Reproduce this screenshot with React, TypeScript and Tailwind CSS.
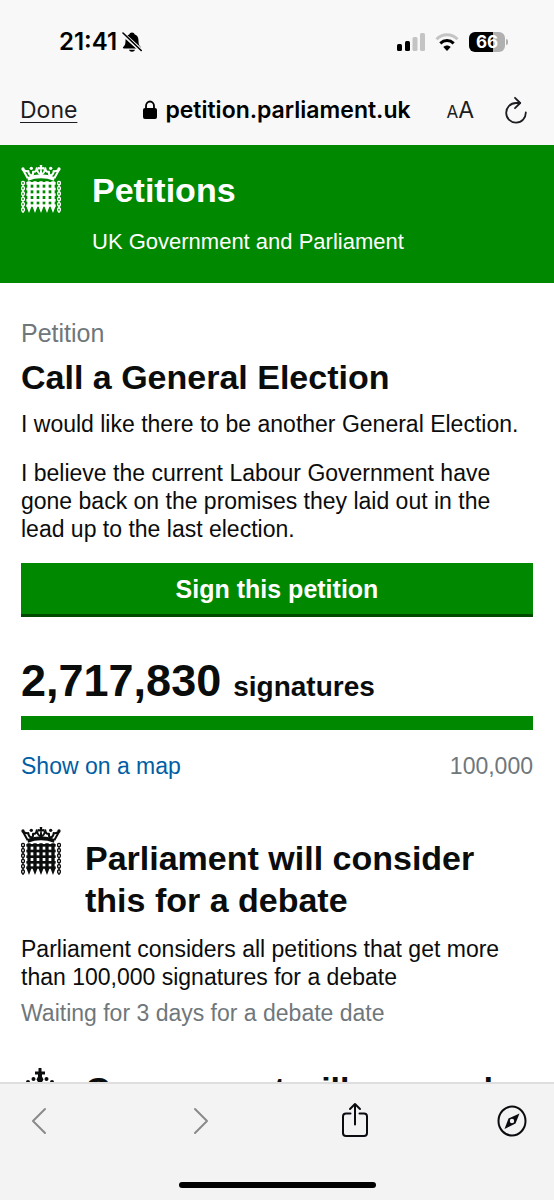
import type { ReactNode } from 'react';

const GOAL = 100000;
const SIGNATURES = 2717830;

const chainLinks = [49, 65, 81, 97, 113, 129];
const barColumns = [19, 37, 55, 73, 91];
const barRows = [51, 68, 85, 102];

function Portcullis({ className }: { className?: string }) {
  return (
    <svg viewBox="0 0 120 144" className={className} fill="currentColor" aria-hidden>
      {/* crown */}
      <path d="M21 47 L19 36 Q60 19 101 36 L99 47 Q60 33 21 47 Z" />
      <path
        d="M20 40 L6 14 Q14 20 22 18 Q22 28 30 32 Q38 30 36 20 Q46 22 47 10 Q50 26 60 28 Q70 26 73 10 Q74 22 84 20 Q82 30 90 32 Q98 28 98 18 Q106 20 114 14 L100 40"
        fill="none"
        stroke="currentColor"
        strokeWidth="6"
        strokeLinejoin="round"
      />
      <path d="M56 28 L58 13 L50 14 L50 6 L57 7 L56 0 L64 0 L63 7 L70 6 L70 14 L62 13 L64 28 Z" />
      <circle cx="6" cy="12" r="5" />
      <circle cx="31" cy="10" r="5" />
      <circle cx="89" cy="10" r="5" />
      <circle cx="114" cy="12" r="5" />
      {/* gate */}
      {barColumns.map((x) => (
        <path key={x} d={`M${x} 49 h10 v70 l3 4 l-8 21 l-8 -21 l3 -4 Z`} />
      ))}
      {barRows.map((y) => (
        <rect key={y} x="16" y={y} width="88" height="8" />
      ))}
      <rect x="16" y="118" width="88" height="7" />
      {/* chains */}
      {chainLinks.map((y) => (
        <g key={y} fill="none" stroke="currentColor" strokeWidth="4">
          <rect x="2" y={y} width="8" height="10" rx="3" />
          <rect x="110" y={y} width="8" height="10" rx="3" />
          <path d={`M6 ${y + 10}v6M114 ${y + 10}v6`} />
        </g>
      ))}
    </svg>
  );
}

function RoyalCrown({ className }: { className?: string }) {
  return (
    <svg viewBox="0 0 40 48" className={className} fill="currentColor" aria-hidden>
      <path d="M17.500 0h3v3.500H24v3h-3v2l1.500 3-2 3.500h-3l-2-3.500 1.500-3v-2h-3v-3h3.500z" />
      <circle cx="12.500" cy="11" r="2" />
      <circle cx="25.500" cy="11" r="2" />
      <circle cx="7" cy="14" r="2" />
      <circle cx="31" cy="14" r="2" />
      <path d="M3 21q8-6 16-3 8-3 16 3l-4 18H7z" />
    </svg>
  );
}

function StatusBar() {
  return (
    <div className="flex h-[30px] items-center justify-between pl-[59px] pr-[46px] text-black">
      <div className="flex items-center gap-[5px]">
        <span className="text-2xl font-semibold leading-[30px]">21:41</span>
        <svg viewBox="0 0 20 22" className="h-[22px] w-5" aria-hidden>
          <path
            d="M10 1.500c-1.500 0-2.300.8-2.500 1.700C4.700 4.100 3.500 6.500 3.500 9.500c0 4-.8 5-2.300 6.500-.6.700-.2 1.500.8 1.500h16c1 0 1.400-.8.800-1.500-1.500-1.500-2.300-2.500-2.300-6.500 0-3-1.200-5.400-4-6.300-.2-.9-1-1.700-2.500-1.700zM7 18.800h6c-.3 1.200-1.500 2-3 2s-2.700-.8-3-2z"
            fill="currentColor"
          />
          <path d="M1.200 3.200 19 19.200" stroke="#f8f8f8" strokeWidth="4" />
          <path d="M1 2 19.200 19.500" stroke="currentColor" strokeWidth="1.600" strokeLinecap="round" />
        </svg>
      </div>
      <div className="flex items-center gap-2.5">
        <svg viewBox="0 0 28 18" className="h-[18px] w-7" aria-hidden>
          <rect x="0" y="11" width="5" height="7" rx="1.500" />
          <rect x="8" y="8" width="5" height="10" rx="1.500" />
          <g fill="#c4c4c4">
            <rect x="15.500" y="4" width="5" height="14" rx="1.500" />
            <rect x="23" y="0" width="5" height="18" rx="1.500" />
          </g>
        </svg>
        <svg viewBox="0 0 24 18" className="h-[18px] w-6" fill="none" strokeWidth="3" aria-hidden>
          <path d="M1.500 6.200C7.500.3 16.500.3 22.500 6.200" stroke="#c4c4c4" />
          <path d="M5.300 10.300c4-3.700 9.400-3.700 13.400 0" stroke="black" />
          <path d="M12 18 8.300 14.100c2.200-2 5.200-2 7.400 0z" fill="black" />
        </svg>
        <div className="flex items-center gap-px">
          <span className="flex h-5 w-9 items-center justify-center rounded-md bg-linear-to-r from-black from-66% to-[#b0b0b0] to-66% text-[17px] font-bold leading-5 text-white">
            66
          </span>
          <span className="h-1.5 w-0.5 rounded-r-full bg-[#b0b0b0]" />
        </div>
      </div>
    </div>
  );
}

function AddressBar() {
  return (
    <div className="grid grid-cols-[1fr_auto_1fr] items-center px-5 pb-[17px] pt-[35px] text-[#1c1c22]">
      <button className="justify-self-start text-[23px] leading-9 underline decoration-1 underline-offset-4">Done</button>
      <div className="flex items-center gap-2 text-black">
        <svg viewBox="0 0 14 20" className="h-5 w-3.5" aria-hidden>
          <rect x="0" y="8" width="14" height="11" rx="2" />
          <path d="M3 9V6a4 4.500 0 0 1 8 0v3" fill="none" stroke="currentColor" strokeWidth="1.800" />
        </svg>
        <span className="text-[23px] font-semibold leading-9">petition.parliament.uk</span>
      </div>
      <div className="flex items-center justify-end gap-6">
        <button className="flex items-baseline leading-9" aria-label="Page settings">
          <span className="text-[17px] leading-6">A</span>
          <span className="text-[23px]">A</span>
        </button>
        <button className="flex w-9 justify-center" aria-label="Reload">
          <svg
            viewBox="0 0 24 28"
            className="h-7 w-6"
            fill="none"
            stroke="currentColor"
            strokeWidth="1.800"
            strokeLinecap="round"
            strokeLinejoin="round"
            aria-hidden
          >
            <path d="M16 7H12A9.800 9.800 0 1 0 21.800 16.500" />
            <path d="M11 1.800 16.200 7 11 12.200" />
          </svg>
        </button>
      </div>
    </div>
  );
}

function ToolButton({ label, muted, children }: { label: string; muted?: boolean; children: ReactNode }) {
  return (
    <button aria-label={label} className={muted ? 'text-[#8a8a8a]' : 'text-[#0b0c10]'}>
      <svg
        viewBox="0 0 40 40"
        className="size-10"
        fill="none"
        stroke="currentColor"
        strokeWidth="2"
        strokeLinecap="round"
        strokeLinejoin="round"
        aria-hidden
      >
        {children}
      </svg>
    </button>
  );
}

function Toolbar() {
  return (
    <footer className="shrink-0 border-t-2 border-[#dedede] bg-[#f3f3f3]">
      <nav className="flex justify-between px-[22px] pt-[17px]">
        <ToolButton label="Back" muted>
          <path d="M23 8 11 20l12 12" />
        </ToolButton>
        <ToolButton label="Forward" muted>
          <path d="M16 8l12 12L16 32" />
        </ToolButton>
        <ToolButton label="Share">
          <path d="M15.500 12.500H11A3 3 0 0 0 8 15.500V32a3 3 0 0 0 3 3h18a3 3 0 0 0 3-3V15.500a3 3 0 0 0-3-3h-4.500" />
          <path d="M20 23.500V3M15 8l5-5 5 5" />
        </ToolButton>
        <ToolButton label="Open in browser">
          <ellipse cx="20" cy="20" rx="13.500" ry="14.500" />
          <path
            fillRule="evenodd"
            fill="currentColor"
            stroke="none"
            d="M27.500 12.500 23.500 22.500 12.500 28l4-10.500zM20 17.800a2.200 2.200 0 1 0 0 4.400 2.200 2.200 0 0 0 0-4.400z"
          />
        </ToolButton>
      </nav>
      <div className="flex justify-center pb-3 pt-[41px]">
        <span className="h-1.5 w-[197px] rounded-full bg-black" />
      </div>
    </footer>
  );
}

export default function App() {
  const progress = Math.min(100, (SIGNATURES / GOAL) * 100);

  return (
    <div className="flex h-screen flex-col bg-white font-['Liberation_Sans',Arial,sans-serif] text-[23px] leading-7 text-[#0b0c0c]">
      <header className="shrink-0 bg-[#f8f8f8] pt-[27px] font-[Inter,sans-serif]">
        <StatusBar />
        <AddressBar />
      </header>

      <div className="min-h-0 flex-1 overflow-y-auto [scrollbar-width:none]">
        <div className="flex gap-[31px] bg-[#008800] px-[21px] pb-[27px] pt-5 text-white">
          <Portcullis className="h-12 w-10 shrink-0" />
          <div className="pt-1">
            <a href="#home" className="block text-[34px] font-bold leading-[42px]">
              Petitions
            </a>
            <p className="mt-[17px] text-[22px]">UK Government and Parliament</p>
          </div>
        </div>

        <main className="px-[21px] pb-10 pt-9">
          <p className="text-[25px] text-[#6f777b]">Petition</p>
          <h1 className="mt-[9px] text-[34px] font-bold leading-[42px]">Call a General Election</h1>
          <p className="mt-3">I would like there to be another General Election.</p>
          <p className="mt-[21px]">
            I believe the current Labour Government have gone back on the promises they laid out in the lead up to the
            last election.
          </p>
          <button className="mt-5 h-[54px] w-full border-b-[3px] border-[#004a00] bg-[#008800] text-[25px] font-bold text-white">
            Sign this petition
          </button>

          <section>
            <p className="mt-[39px] text-[28px] font-bold leading-[50px]">
              <span className="mr-3 text-[45px]">{SIGNATURES.toLocaleString('en-GB')}</span>
              signatures
            </p>
            <div className="mt-1 h-3.5 bg-[#dee0e2]">
              <div className="h-full bg-[#008800]" style={{ width: `${progress}%` }} />
            </div>
            <div className="mt-[22px] flex justify-between">
              <a href="#map" className="text-[#005ea5]">
                Show on a map
              </a>
              <span className="text-[#6f777b]">{GOAL.toLocaleString('en-GB')}</span>
            </div>
          </section>

          <section className="mt-[47px]">
            <div className="flex gap-6">
              <Portcullis className="h-12 w-10 shrink-0" />
              <h2 className="pt-2.5 text-[34px] font-bold leading-[42px]">Parliament will consider this for a debate</h2>
            </div>
            <p className="mt-3.5">Parliament considers all petitions that get more than 100,000 signatures for a debate</p>
            <p className="mt-2 text-[#6f777b]">Waiting for 3 days for a debate date</p>
          </section>

          <section className="mt-[41px]">
            <div className="flex gap-6">
              <RoyalCrown className="h-12 w-10 shrink-0" />
              <h2 className="text-[34px] font-bold leading-[42px]">Government will respond</h2>
            </div>
          </section>
        </main>
      </div>

      <Toolbar />
    </div>
  );
}
